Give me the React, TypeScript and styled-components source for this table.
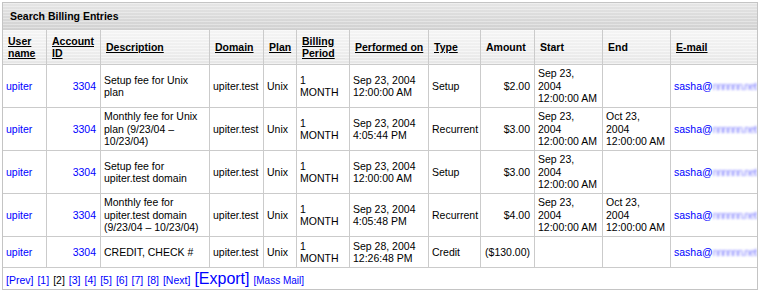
import React from 'react';
import styled, { createGlobalStyle } from 'styled-components';

const GlobalStyle = createGlobalStyle`
  html, body {
    margin: 0;
    padding: 0;
    background: #ffffff;
  }
  body {
    font-family: "Liberation Sans", Arial, sans-serif;
    font-size: 10.5px;
    color: #000;
  }
`;

const Page = styled.div`
  padding: 2px 1px 0 2px;
`;

const Panel = styled.div`
  border: 1px solid #c4c4c4;
  background: #fff;
`;

const TitleBar = styled.div`
  height: 26px;
  line-height: 26px;
  padding-left: 7px;
  font-weight: bold;
  font-size: 10.5px;
  border-bottom: 1px solid #cfcfcf;
  background:
    repeating-linear-gradient(
      to bottom,
      rgba(255, 255, 255, 0.35) 0px,
      rgba(255, 255, 255, 0.35) 1px,
      rgba(0, 0, 0, 0) 1px,
      rgba(0, 0, 0, 0) 3px
    ),
    linear-gradient(to bottom, #e6e6e6 0%, #dadada 55%, #d2d2d2 100%);
`;

const Table = styled.table`
  width: 100%;
  table-layout: fixed;
  border-collapse: separate;
  border-spacing: 0;
`;

const Row = styled.tr<{ $h: number }>`
  height: ${p => p.$h}px;
`;

const Th = styled.th<{ $last?: boolean }>`
  text-align: left;
  vertical-align: middle;
  font-weight: bold;
  white-space: nowrap;
  line-height: 12.5px;
  padding: 4px 4px 4px 5px;
  border-right: ${p => (p.$last ? 'none' : '1px solid #cbcbcb')};
  border-bottom: 1px solid #cbcbcb;
  background:
    repeating-linear-gradient(
      to bottom,
      rgba(255, 255, 255, 0.5) 0px,
      rgba(255, 255, 255, 0.5) 1px,
      rgba(0, 0, 0, 0) 1px,
      rgba(0, 0, 0, 0) 3px
    ),
    linear-gradient(to bottom, #f4f4f4 0%, #eeeeee 60%, #e6e6e6 100%);
`;

const SortLink = styled.a`
  color: #000;
  text-decoration: underline;
`;

const Td = styled.td<{ $right?: boolean; $last?: boolean; $clip?: boolean }>`
  vertical-align: middle;
  text-align: ${p => (p.$right ? 'right' : 'left')};
  line-height: 12.5px;
  padding: 2px 4px 2px 3px;
  border-right: ${p => (p.$last ? 'none' : '1px solid #cbcbcb')};
  border-bottom: 1px solid #cbcbcb;
  overflow: ${p => (p.$clip ? 'hidden' : 'visible')};
  white-space: ${p => (p.$clip ? 'nowrap' : 'normal')};
`;

const Link = styled.a`
  color: #0000ff;
  text-decoration: none;
`;

// the mailbox domain is smudged out in the source screenshot
const Hidden = styled.span`
  color: #5a5aff;
  filter: blur(0.8px);
  opacity: 0.75;
  letter-spacing: -0.9px;
`;

const Pager = styled.div`
  height: 21px;
  line-height: 22px;
  padding-left: 3px;
  white-space: nowrap;
`;

const PageLink = styled.a<{ $size?: number }>`
  color: #0000ff;
  text-decoration: none;
  font-size: ${p => p.$size || 10.5}px;
  margin-right: 4px;
`;

const Current = styled.span`
  margin-right: 4px;
`;

const widths = [44, 54, 109, 54, 33, 53, 79, 52, 54, 68, 68, 86];

type Entry = {
  desc: string;
  performed: string;
  type: string;
  amount: string;
  start: string;
  end: string;
  h: number;
};

const entries: Entry[] = [
  {
    desc: 'Setup fee for Unix plan',
    performed: 'Sep 23, 2004 12:00:00 AM',
    type: 'Setup',
    amount: '$2.00',
    start: 'Sep 23, 2004 12:00:00 AM',
    end: '',
    h: 43,
  },
  {
    desc: 'Monthly fee for Unix plan (9/23/04 – 10/23/04)',
    performed: 'Sep 23, 2004 4:05:44 PM',
    type: 'Recurrent',
    amount: '$3.00',
    start: 'Sep 23, 2004 12:00:00 AM',
    end: 'Oct 23, 2004 12:00:00 AM',
    h: 43,
  },
  {
    desc: 'Setup fee for upiter.test domain',
    performed: 'Sep 23, 2004 12:00:00 AM',
    type: 'Setup',
    amount: '$3.00',
    start: 'Sep 23, 2004 12:00:00 AM',
    end: '',
    h: 43,
  },
  {
    desc: 'Monthly fee for upiter.test domain (9/23/04 – 10/23/04)',
    performed: 'Sep 23, 2004 4:05:48 PM',
    type: 'Recurrent',
    amount: '$4.00',
    start: 'Sep 23, 2004 12:00:00 AM',
    end: 'Oct 23, 2004 12:00:00 AM',
    h: 43,
  },
  {
    desc: 'CREDIT, CHECK #',
    performed: 'Sep 28, 2004 12:26:48 PM',
    type: 'Credit',
    amount: '($130.00)',
    start: '',
    end: '',
    h: 31,
  },
];

const App: React.FC = () => (
  <Page>
    <GlobalStyle />
    <Panel>
      <TitleBar>Search Billing Entries</TitleBar>
      <Table>
        <colgroup>
          {widths.map((w, i) => (
            <col key={i} style={{ width: w }} />
          ))}
        </colgroup>
        <thead>
          <Row $h={35}>
            <Th><SortLink>User<br />name</SortLink></Th>
            <Th><SortLink>Account<br />ID</SortLink></Th>
            <Th><SortLink>Description</SortLink></Th>
            <Th><SortLink>Domain</SortLink></Th>
            <Th><SortLink>Plan</SortLink></Th>
            <Th><SortLink>Billing<br />Period</SortLink></Th>
            <Th><SortLink>Performed on</SortLink></Th>
            <Th><SortLink>Type</SortLink></Th>
            <Th>Amount</Th>
            <Th>Start</Th>
            <Th>End</Th>
            <Th $last><SortLink>E-mail</SortLink></Th>
          </Row>
        </thead>
        <tbody>
          {entries.map((e, i) => (
            <Row key={i} $h={e.h}>
              <Td><Link>upiter</Link></Td>
              <Td $right><Link>3304</Link></Td>
              <Td>{e.desc}</Td>
              <Td>upiter.test</Td>
              <Td>Unix</Td>
              <Td>1 MONTH</Td>
              <Td>{e.performed}</Td>
              <Td>{e.type}</Td>
              <Td $right>{e.amount}</Td>
              <Td>{e.start}</Td>
              <Td>{e.end}</Td>
              <Td $last $clip>
                <Link>sasha@<Hidden>nnnnnn.net</Hidden></Link>
              </Td>
            </Row>
          ))}
        </tbody>
      </Table>
      <Pager>
        <PageLink>[Prev]</PageLink>
        <PageLink>[1]</PageLink>
        <Current>[2]</Current>
        <PageLink>[3]</PageLink>
        <PageLink>[4]</PageLink>
        <PageLink>[5]</PageLink>
        <PageLink>[6]</PageLink>
        <PageLink>[7]</PageLink>
        <PageLink>[8]</PageLink>
        <PageLink>[Next]</PageLink>
        <PageLink $size={16}>[Export]</PageLink>
        <PageLink $size={10}>[Mass Mail]</PageLink>
      </Pager>
    </Panel>
  </Page>
);

export default App;
